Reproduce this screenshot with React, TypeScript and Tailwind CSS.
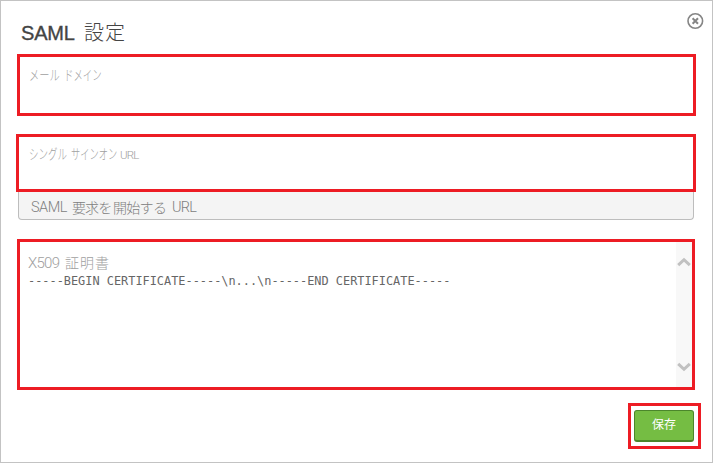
function CloseIcon() {
  return (
    <svg width="18" height="18" viewBox="0 0 18 18" fill="none" stroke="#858585">
      <circle cx="9.3" cy="9" r="7.3" strokeWidth="1.6" />
      <path d="M6.6 6.3 L12 11.7 M12 6.3 L6.6 11.7" strokeWidth="2" />
    </svg>
  );
}

function Chevron({ down = false }: { down?: boolean }) {
  return (
    <svg width="14" height="10" viewBox="0 0 14 10" fill="none" stroke="#c1c1c1" strokeWidth="3">
      <path d={down ? "M1.2 1.8 L7 7.3 L12.8 1.8" : "M1.2 8.2 L7 2.7 L12.8 8.2"} />
    </svg>
  );
}

export default function App() {
  return (
    <div className="flex h-[463px] w-[713px] flex-col border border-[#c3c3c3] bg-white font-['Liberation_Sans','Noto_Sans_CJK_JP',sans-serif]">
      <header className="flex h-[53px] shrink-0 items-start justify-between pl-5 pr-2">
        <h1 className="flex pt-[16px] text-[20px] leading-[30px] text-[#444]">
          <span className="w-[63px] pt-px text-[20px] tracking-[-0.2px] [-webkit-text-stroke:0.35px_#444]">SAML</span>
          <span className="font-['Noto_Sans_CJK_JP'] font-light tracking-[1px]">設定</span>
        </h1>
        <button className="mt-[11px]" aria-label="閉じる">
          <CloseIcon />
        </button>
      </header>

      <div className="ml-4 h-[62px] w-[679px] shrink-0 border-[3px] border-[#ed1c24] pl-[9px] pt-[8px] text-[14px] leading-5 text-[#a0a0a0]">
        <div className="flex whitespace-nowrap font-light">
          <span className="w-[35px] origin-left scale-x-[0.73]">メール</span>
          <span className="w-[40px] origin-left scale-x-[0.67]">ドメイン</span>
        </div>
      </div>

      <div className="ml-[15px] mt-[18px] h-[58px] w-[680px] shrink-0 border-[3px] border-[#ed1c24] pl-[10px] pt-[7px] text-[14px] leading-5 text-[#a0a0a0]">
        <div className="flex whitespace-nowrap font-light">
          <span className="w-[42px] origin-left scale-x-[0.68]">シングル</span>
          <span className="w-[49px] origin-left scale-x-[0.66]">サインオン</span>
          <span className="pt-px font-['Roboto'] text-[11.5px] tracking-[-0.8px]">URL</span>
        </div>
      </div>
      <div className="ml-[17px] flex h-[28px] w-[676px] shrink-0 rounded-b-[4px] border border-t-0 border-[#bdbdbd] bg-[#f4f4f4] pl-3 pt-[6px] text-[14px] font-light leading-5 text-[#808080]">
        <span className="w-[41px] font-['Roboto'] text-[14.5px] tracking-[-0.5px]">SAML</span>
        <span className="w-[41px] tracking-[-0.9px]">要求を</span>
        <span className="w-[59px] tracking-[-0.7px]">開始する</span>
        <span className="font-['Roboto'] text-[14.5px] tracking-[-0.7px]">URL</span>
      </div>

      <div className="ml-4 mt-[19px] flex h-[151px] w-[678px] shrink-0 justify-between border-[3px] border-[#ed1c24] pl-[8px]">
        <div className="pt-[10px]">
          <div className="flex text-[14px] font-light leading-[22px] text-[#a0a0a0]">
            <span className="w-[37px] font-['Roboto'] text-[15px] tracking-[-0.7px]">X509</span>
            <span className="tracking-[1px]">証明書</span>
          </div>
          <div className="whitespace-pre font-['DejaVu_Sans_Mono',monospace] text-[11.9px] leading-[14px] text-[#666]">
            {"-----BEGIN CERTIFICATE-----\\n...\\n-----END CERTIFICATE-----"}
          </div>
        </div>
        <div className="flex w-4 flex-col items-center justify-between bg-[#f8f8f8] pb-[15px] pt-[15px]">
          <Chevron />
          <Chevron down />
        </div>
      </div>

      <div className="ml-[627px] mt-[13px] h-[46px] w-[73px] shrink-0 border-[3px] border-[#ed1c24] pl-[3px] pt-1">
        <button className="flex h-8 w-[60px] items-center justify-center rounded-[3px] border border-b-2 border-[#4b862b] bg-[#75bd43] pb-[2px] text-[12px] text-white">
          保存
        </button>
      </div>
    </div>
  );
}
